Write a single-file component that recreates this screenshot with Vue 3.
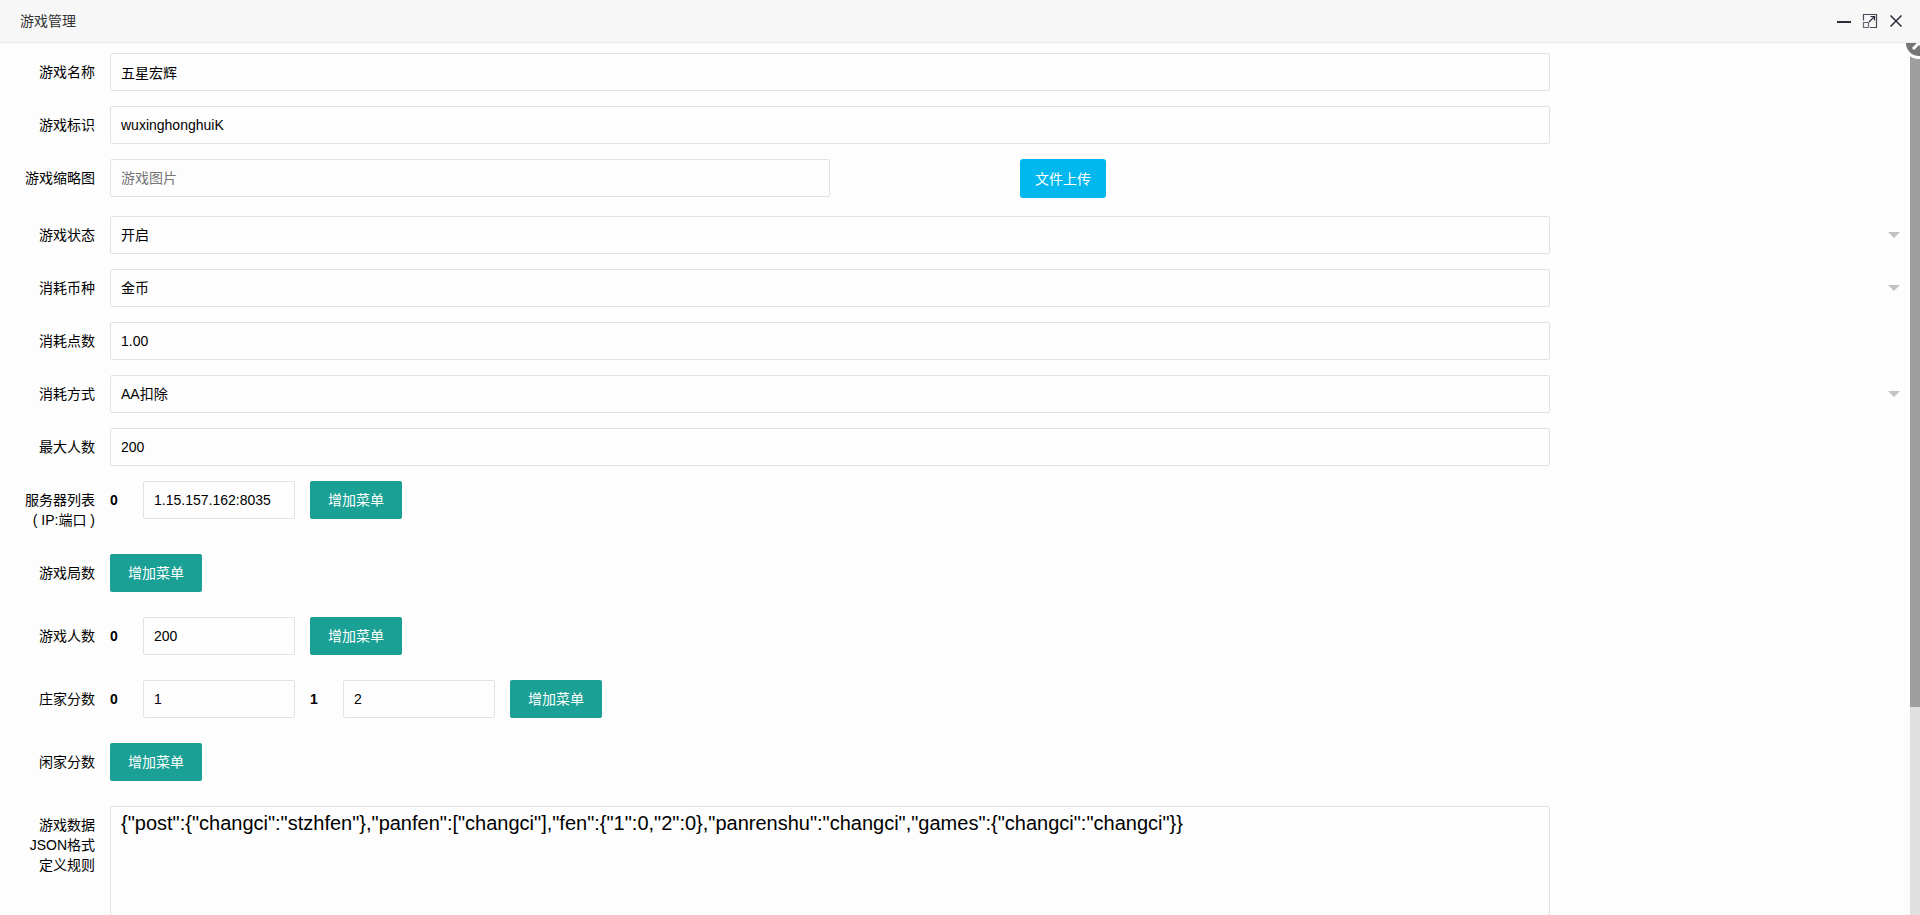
<script setup>
import { reactive } from 'vue'

const form = reactive({
  name: '五星宏辉',
  key: 'wuxinghonghuiK',
  thumb: '',
  status: '开启',
  currency: '金币',
  points: '1.00',
  mode: 'AA扣除',
  max: '200',
  json: '{"post":{"changci":"stzhfen"},"panfen":["changci"],"fen":{"1":0,"2":0},"panrenshu":"changci","games":{"changci":"changci"}}',
})

const fields = [
  { id: 'name', label: '游戏名称' },
  { id: 'key', label: '游戏标识' },
  { id: 'thumb', label: '游戏缩略图', upload: true },
  { id: 'status', label: '游戏状态', options: ['开启', '关闭'] },
  { id: 'currency', label: '消耗币种', options: ['金币', '房卡'] },
  { id: 'points', label: '消耗点数' },
  { id: 'mode', label: '消耗方式', options: ['AA扣除', '房主扣除'] },
  { id: 'max', label: '最大人数' },
]

const lists = reactive([
  { id: 'servers', lines: ['服务器列表', '( IP:端口 )'], values: ['1.15.157.162:8035'] },
  { id: 'rounds', lines: ['游戏局数'], values: [] },
  { id: 'players', lines: ['游戏人数'], values: ['200'] },
  { id: 'banker', lines: ['庄家分数'], values: ['1', '2'] },
  { id: 'idle', lines: ['闲家分数'], values: [] },
])
</script>

<template>
  <div class="window">
    <header class="titlebar">
      <h1 class="title">游戏管理</h1>
      <div class="controls">
        <button type="button" class="control" aria-label="最小化">
          <svg width="16" height="16" viewBox="0 0 16 16"><path d="M1 9H15" stroke="#2d2c3b" stroke-width="2" /></svg>
        </button>
        <button type="button" class="control" aria-label="最大化">
          <svg width="16" height="16" viewBox="0 0 16 16" fill="none" stroke="#4b4a58" stroke-width="1.2">
            <path d="M1.5 7.5V1.5H14.5V14.5H8" />
            <path d="M1.5 9.5H6.5V14.5H1.5Z" stroke="#6b6a76" />
            <path d="M7 9L12 4M8.5 3.5H12.5V7.5" stroke="#2d2c3b" />
          </svg>
        </button>
        <button type="button" class="control" aria-label="关闭">
          <svg width="16" height="16" viewBox="0 0 16 16"><path d="M2.5 2.5L13.5 13.5M13.5 2.5L2.5 13.5" stroke="#2d2c3b" stroke-width="1.5" /></svg>
        </button>
      </div>
    </header>

    <main class="body">
      <form class="form" @submit.prevent>
        <div v-for="f in fields" :key="f.id" class="row">
          <label class="label" :for="f.id">{{ f.label }}</label>
          <div v-if="f.upload" class="block upload">
            <input :id="f.id" v-model="form[f.id]" class="input half" type="text" placeholder="游戏图片" />
            <button type="button" class="upload-btn">文件上传</button>
          </div>
          <div v-else-if="f.options" class="block">
            <select :id="f.id" v-model="form[f.id]" class="input wide">
              <option v-for="o in f.options" :key="o">{{ o }}</option>
            </select>
            <i class="caret"></i>
          </div>
          <div v-else class="block">
            <input :id="f.id" v-model="form[f.id]" class="input wide" type="text" />
          </div>
        </div>

        <div v-for="l in lists" :key="l.id" class="row">
          <div class="label"><span v-for="t in l.lines" :key="t" class="line">{{ t }}</span></div>
          <div class="block items">
            <div v-for="(v, i) in l.values" :key="i" class="item">
              <label class="index" :for="l.id + i">{{ i }}</label>
              <input :id="l.id + i" v-model="l.values[i]" class="input" type="text" />
            </div>
            <button type="button" class="add" @click="l.values.push('')">增加菜单</button>
          </div>
        </div>

        <div class="row">
          <label class="label" for="json">
            <span class="line">游戏数据</span><span class="line">JSON格式</span><span class="line">定义规则</span>
          </label>
          <div class="block">
            <textarea id="json" v-model="form.json" class="input wide area" spellcheck="false"></textarea>
          </div>
        </div>
      </form>
      <div class="track"><div class="thumb"></div></div>
      <button type="button" class="badge" aria-label="关闭弹层">
        <svg width="32" height="32" viewBox="0 0 32 32">
          <circle cx="16" cy="16" r="14.5" fill="#757575" stroke="#fff" stroke-width="3" />
          <path d="M10 22L22 10M10 10L22 22" stroke="#fff" stroke-width="3" />
        </svg>
      </button>
    </main>
  </div>
</template>

<style>
body {
  margin: 0;
  background: #fdfdfd;
}
</style>

<style scoped>
.window {
  height: 100vh;
  display: flex;
  flex-direction: column;
  overflow: hidden;
  background: #fdfdfd;
  color: #000;
  font: 14px/20px "Liberation Sans", "Noto Sans CJK SC", sans-serif;
}
.window * {
  box-sizing: border-box;
}
button,
input,
select,
textarea {
  margin: 0;
  font: inherit;
  color: inherit;
}
button {
  padding: 0;
  border: 0;
  cursor: pointer;
}
.titlebar {
  flex: none;
  display: flex;
  align-items: center;
  justify-content: space-between;
  height: 43px;
  padding: 0 16px 0 20px;
  background: #f7f7f7;
  border-bottom: 1px solid #eaeaea;
}
.title {
  margin: 0;
  font-size: 14px;
  font-weight: 400;
  color: #333;
}
.controls {
  display: flex;
  gap: 10px;
}
.control {
  width: 16px;
  height: 16px;
  background: none;
}
.control svg,
.badge svg {
  display: block;
}
.body {
  position: relative;
  flex: 1;
  min-height: 0;
  display: flex;
  overflow: hidden;
}
.form {
  flex: 1;
  padding-top: 10px;
}
.row {
  display: flex;
  align-items: flex-start;
  margin-bottom: 15px;
}
.label {
  flex: none;
  width: 110px;
  padding: 9px 15px;
  text-align: right;
}
.line {
  display: block;
  white-space: nowrap;
}
.block {
  position: relative;
  flex: 1;
  display: flex;
}
.input {
  display: block;
  height: 38px;
  padding: 0 10px;
  border: 1px solid #e2e2e2;
  border-radius: 2px;
  background: #fdfdfd;
  outline: 0;
  appearance: none;
}
.input::placeholder {
  color: #757575;
}
.wide {
  width: 80%;
}
.half {
  width: 40%;
}
.upload {
  height: 42px;
  align-items: flex-start;
}
.upload-btn {
  width: 86px;
  height: 39px;
  margin-left: 190px;
  border-radius: 3px;
  background: #00b7ee;
  color: #fff;
}
.caret {
  position: absolute;
  top: 16px;
  right: 10px;
  border: 6px solid transparent;
  border-top-color: #c2c2c2;
  border-bottom: 0;
}
.items {
  padding-bottom: 10px;
}
.item {
  display: flex;
  align-items: center;
  margin-right: 15px;
}
.index {
  width: 33px;
  font-weight: 700;
}
.item .input {
  width: 152px;
}
.add {
  height: 38px;
  padding: 0 18px;
  border-radius: 2px;
  background: #1aa094;
  color: #fff;
}
.area {
  height: 300px;
  padding: 5px 10px;
  font-size: 20px;
  line-height: 22px;
  resize: none;
}
.track {
  flex: none;
  width: 10px;
  background: #e0e0e0;
}
.thumb {
  height: 76.2%;
  background: #9e9e9e;
}
.badge {
  position: absolute;
  top: -16px;
  right: -15px;
  background: none;
}
</style>
